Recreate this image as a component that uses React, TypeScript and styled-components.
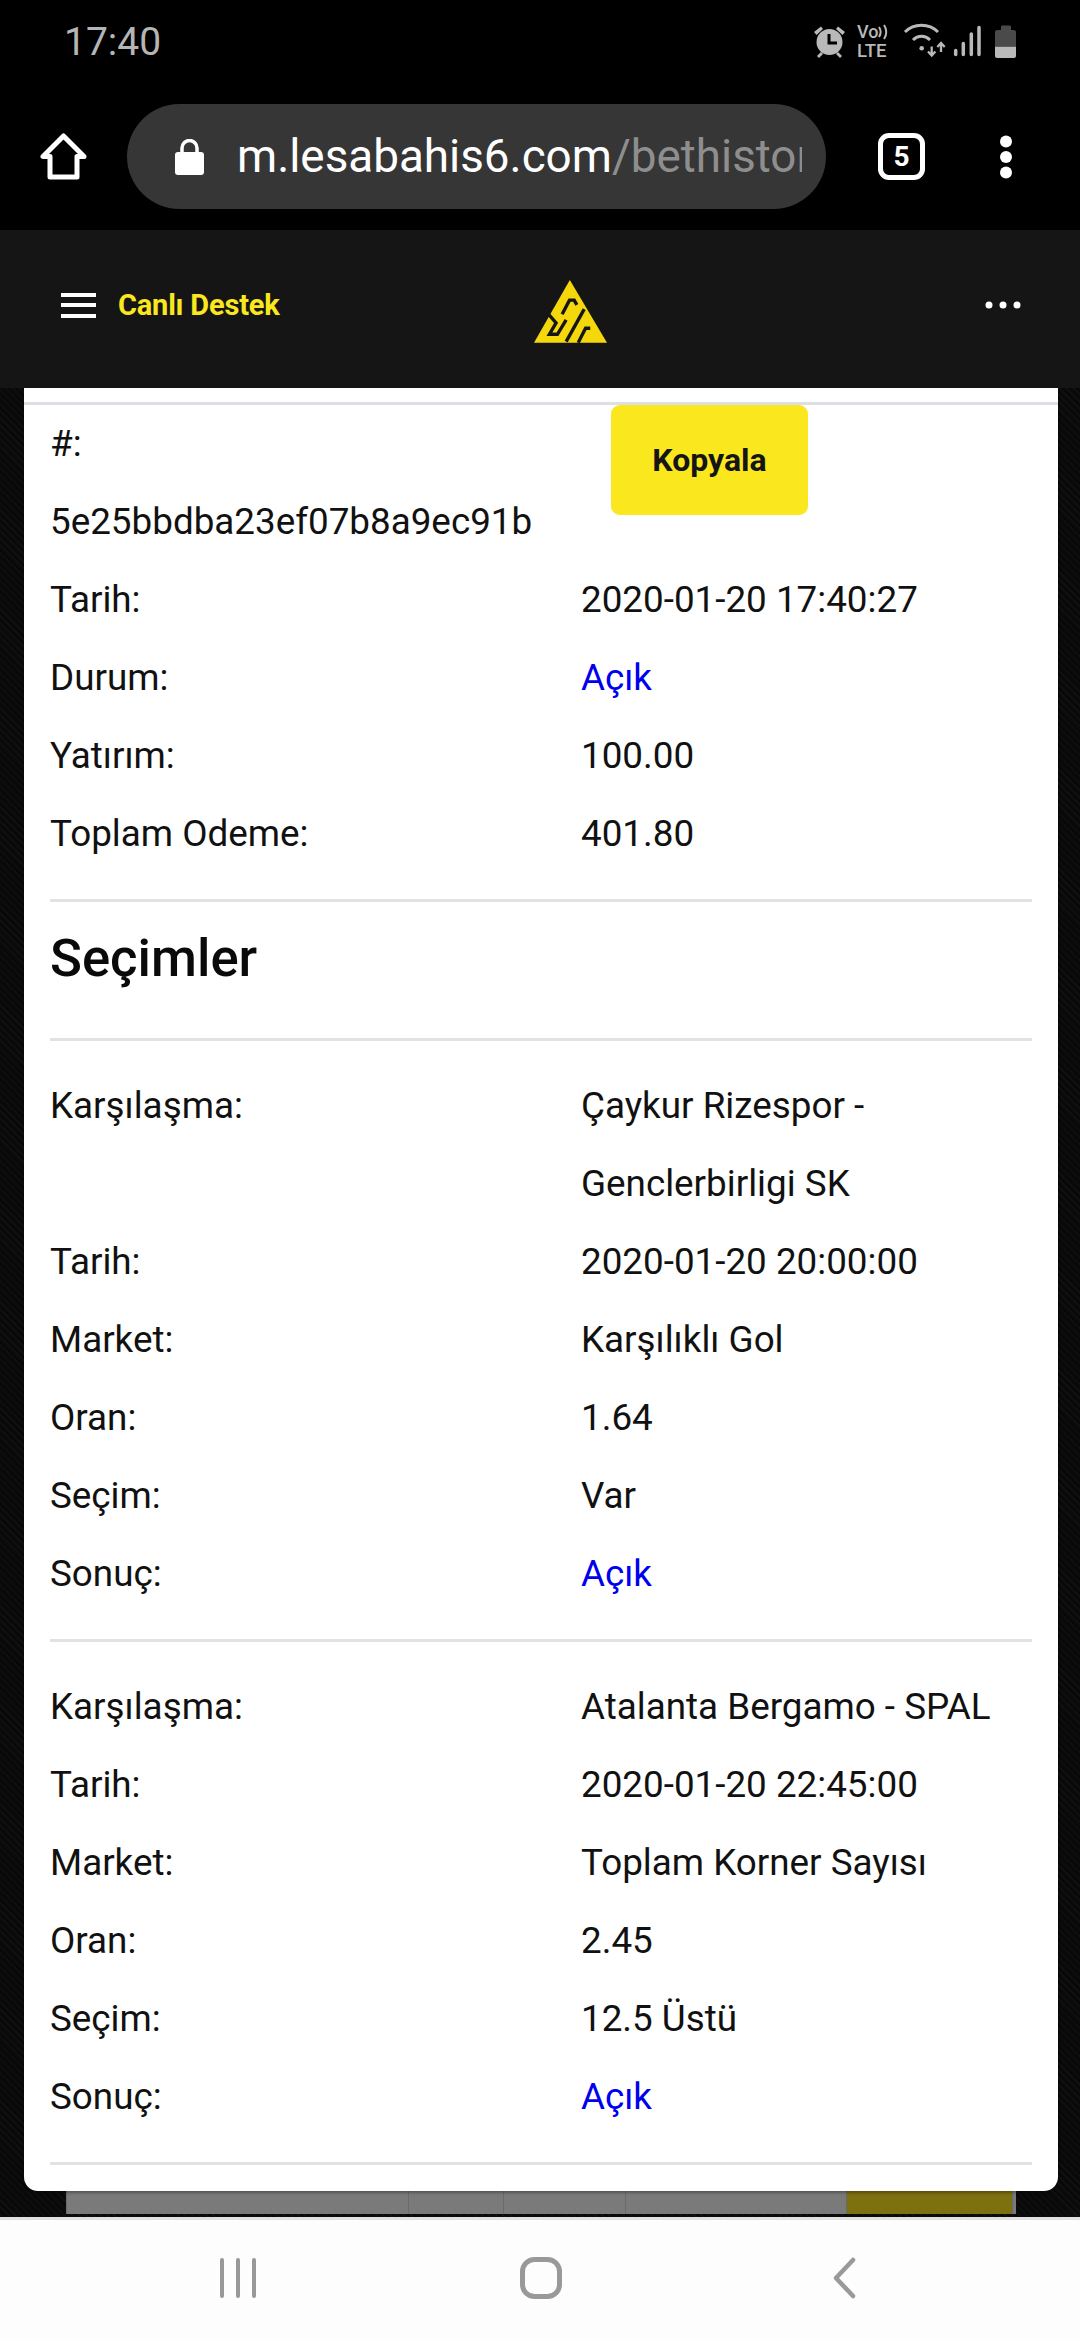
import * as React from 'react';
import styled, { createGlobalStyle } from 'styled-components';

const GlobalStyle = createGlobalStyle`
  html, body {
    margin: 0;
    padding: 0;
    background: #000;
    font-family: Roboto, "Liberation Sans", sans-serif;
  }
`;

const yellow = '#fae71e';

const Screen = styled.div`
  width: 1080px;
  height: 2340px;
  display: flex;
  flex-direction: column;
  overflow: hidden;
`;

const StatusBar = styled.div`
  height: 66px;
  flex: none;
  background: #000;
  padding: 0 64px;
  display: flex;
  align-items: center;
  justify-content: space-between;
  box-sizing: border-box;
  margin-top: 9px;
`;

const Clock = styled.span`
  color: #b5b5b5;
  font-size: 39px;
  line-height: 44px;
`;

const BrowserBar = styled.div`
  height: 155px;
  flex: none;
  background: #000;
  display: flex;
  align-items: center;
  padding: 29px 0 21px 40px;
  box-sizing: border-box;
`;

const UrlPill = styled.div`
  width: 699px;
  height: 105px;
  margin-left: 40px;
  border-radius: 53px;
  background: #363636;
  display: flex;
  align-items: center;
  padding-left: 48px;
  box-sizing: border-box;
`;

const UrlText = styled.div`
  width: 565px;
  margin-left: 33px;
  overflow: hidden;
  white-space: nowrap;
  font-size: 45.800px;
  line-height: 60px;
  color: #fff;
`;

const UrlPath = styled.span`
  color: #8e8e8e;
`;

const BarIcons = styled.div`
  display: flex;
  align-items: center;
  height: 105px;
  margin-left: 52px;
  gap: 74px;
`;

const TabCount = styled.div`
  width: 47px;
  height: 47px;
  box-sizing: border-box;
  border: 5px solid #fff;
  border-radius: 11px;
  color: #fff;
  font-size: 28px;
  font-weight: 700;
  display: flex;
  align-items: center;
  justify-content: center;
`;

const SiteHeader = styled.header`
  height: 158px;
  flex: none;
  background: #151515;
  display: flex;
  align-items: center;
  padding: 0 59px 8px 61px;
  box-sizing: border-box;
  color: #fff;
`;

const Hamburger = styled.div`
  width: 35px;
  height: 25px;
  display: flex;
  flex-direction: column;
  justify-content: space-between;
  & > i {
    display: block;
    height: 4px;
    background: #fff;
  }
`;

const LiveSupport = styled.span`
  margin-left: 22px;
  color: ${yellow};
  font-size: 29px;
  font-weight: 700;
  letter-spacing: -0.2px;
`;

const LogoSlot = styled.div`
  flex: 1;
  display: flex;
  justify-content: center;
  padding-right: 124px;
  padding-top: 12px;
`;

const Page = styled.main`
  flex: 1;
  position: relative;
  min-height: 0;
  background: repeating-linear-gradient(45deg, #0b0b0b 0 2px, #111 2px 3px, #080808 3px 5px);
  padding: 0 22px 0 24px;
`;

const Strip = styled.div`
  position: absolute;
  left: 66px;
  width: 950px;
  top: 1803px;
  height: 23px;
  display: grid;
  grid-template-columns: 342px 95px 122px 221px 166px 4px;
  background: #7a7a7a;
`;

const StripCell = styled.div<{ $gold?: boolean }>`
  background: ${p => (p.$gold ? '#7c700f' : '#7a7a7a')};
  border-left: 1px solid #6a6a6a;
`;

const Card = styled.section`
  position: relative;
  z-index: 1;
  height: 1803px;
  box-sizing: border-box;
  background: #fff;
  border-radius: 0 0 14px 14px;
  box-shadow: 0 2px 3px rgba(0, 0, 0, 0.3);
  padding: 14px 26px 0;
  color: #111;
  font-size: 36.800px;
`;

const TopRule = styled.div`
  height: 3px;
  margin: 0 -26px;
  background: #dddfe4;
`;

const Rule = styled.div<{ $before?: number; $after?: number }>`
  height: 3px;
  background: #e2e2e2;
  margin: ${p => p.$before ?? 26}px 0 ${p => p.$after ?? 26}px;
`;

const Rows = styled.div`
  display: grid;
  grid-template-columns: 531px 1fr;
  line-height: 78px;
`;

const HashValue = styled.div`
  grid-column: 1;
  white-space: nowrap;
`;

const CopyButton = styled.button`
  grid-column: 2;
  grid-row: 1 / span 2;
  width: 197px;
  height: 110px;
  margin-left: 30px;
  border: 0;
  border-radius: 9px;
  background: ${yellow};
  color: #151515;
  font-family: inherit;
  font-size: 32px;
  font-weight: 700;
  padding: 0;
`;

const Value = styled.div<{ $open?: boolean }>`
  color: ${p => (p.$open ? '#0000ee' : 'inherit')};
`;

const Heading = styled.h2`
  margin: 0;
  font-size: 52.700px;
  font-weight: 500;
  line-height: 112px;
  color: #0a0a0a;
`;

const NavBar = styled.nav`
  height: 123px;
  flex: none;
  box-sizing: border-box;
  border-top: 3px solid #e0e0e0;
  background: #fdfdfd;
  display: grid;
  grid-template-columns: repeat(3, 303px);
  align-items: center;
  justify-items: center;
  padding: 0 0 4px 86px;
`;

const StatusIcons = () => (
  <svg width="203" height="34" viewBox="0 0 203 34" fill="none" overflow="visible">
    <circle cx="16.500" cy="17" r="13" fill="#b9b9b9" />
    <path d="M1 7l7-5.500 2 2.500-6.500 6zM32 7l-7-5.500-2 2.500 6.500 6zM4 31l4-4 2 2-4 4zM29 31l-4-4-2 2 4 4z" fill="#b9b9b9" />
    <path d="M16 9v9h8" stroke="#000" strokeWidth="3" />
    <text x="44" y="13" fill="#b9b9b9" fontSize="18" fontFamily="Roboto" fontWeight="500">Vo</text>
    <path d="M66 2c2 3 2 7 0 10M71 0c3 4 3 10 0 14" stroke="#b9b9b9" strokeWidth="2" />
    <text x="44" y="32" fill="#b9b9b9" fontSize="18.500" fontFamily="Roboto" fontWeight="500">LTE</text>
    <path d="M92 7c9-9 24-9 33 0M100 15c5-5 12-5 17 0" stroke="#b9b9b9" strokeWidth="3" />
    <circle cx="108.700" cy="23.300" r="2.300" fill="#b9b9b9" />
    <path d="M118.700 21.500v9M115 26.500l3.700 4 3.700-4M128 27V18M124.300 22l3.700-4 3.700 4" stroke="#b9b9b9" strokeWidth="2.300" />
    <path d="M142.700 25.500v4M150.300 18.500v11M158.300 9v20.500M166 2.500v27" stroke="#b9b9b9" strokeWidth="3.500" strokeLinecap="round" />
    <path d="M188 5V2c0-1 .5-1.500 1.500-1.500h7c1 0 1.500.5 1.500 1.500v3h3c1 0 2 1 2 2v14h-21V7c0-1 1-2 2-2z" fill="#4a4a4a" />
    <path d="M182 21.500h21V31c0 1-1 2-2 2h-17c-1 0-2-1-2-2z" fill="#b9b9b9" />
  </svg>
);

const HomeIcon = () => (
  <svg width="47" height="47" viewBox="0 0 47 47" fill="none">
    <path d="M23.500 3L3 23.500h7V44h27V23.500h7z" stroke="#fff" strokeWidth="5" strokeLinejoin="round" />
  </svg>
);

const LockIcon = () => (
  <svg width="29" height="36" viewBox="0 0 29 36" fill="none">
    <path d="M7 16V9a7.500 7.500 0 0 1 15 0v7" stroke="#fff" strokeWidth="3.500" />
    <rect x="0" y="13" width="29" height="23" rx="3" fill="#fff" />
  </svg>
);

const MoreVertical = () => (
  <svg width="14" height="44" viewBox="0 0 14 44" fill="#fff">
    <circle cx="7" cy="6.500" r="6" />
    <circle cx="7" cy="22" r="6" />
    <circle cx="7" cy="37.500" r="6" />
  </svg>
);

const MoreHorizontal = () => (
  <svg width="36" height="8" viewBox="0 0 36 8" fill="#fff">
    <circle cx="4" cy="4" r="3.500" />
    <circle cx="18" cy="4" r="3.500" />
    <circle cx="32" cy="4" r="3.500" />
  </svg>
);

const Logo = () => (
  <svg width="73" height="63" viewBox="100 88 218 188">
    <path d="M207 88L318 275H100z" fill="#f5d80c" />
    <g fill="none" stroke="#151515" strokeWidth="10">
      <path d="M250 175L196 272" />
      <path d="M228 162l-8-14h-14l-22 42" />
      <path d="M143 190l23 26-20 34h24l26-43" />
      <path d="M268 232h-14l-22 43" />
    </g>
  </svg>
);

const Recents = () => (
  <svg width="38" height="40" viewBox="0 0 38 40" stroke="#999" strokeWidth="4" strokeLinecap="round">
    <path d="M3 2v36M19 2v36M35 2v36" />
  </svg>
);

const HomeNav = () => (
  <svg width="42" height="42" viewBox="0 0 42 42" fill="none">
    <rect x="2.500" y="2.500" width="37" height="37" rx="12" stroke="#999" strokeWidth="5" />
  </svg>
);

const BackNav = () => (
  <svg width="24" height="42" viewBox="0 0 24 42" fill="none">
    <path d="M21 3L4 21l17 18" stroke="#999" strokeWidth="4.500" strokeLinecap="round" strokeLinejoin="round" />
  </svg>
);

type Pair = [string, string];

const summary: Pair[] = [
  ['Tarih:', '2020-01-20 17:40:27'],
  ['Durum:', 'Açık'],
  ['Yatırım:', '100.00'],
  ['Toplam Odeme:', '401.80'],
];

const selections: Pair[][] = [
  [
    ['Karşılaşma:', 'Çaykur Rizespor - Genclerbirligi SK'],
    ['Tarih:', '2020-01-20 20:00:00'],
    ['Market:', 'Karşılıklı Gol'],
    ['Oran:', '1.64'],
    ['Seçim:', 'Var'],
    ['Sonuç:', 'Açık'],
  ],
  [
    ['Karşılaşma:', 'Atalanta Bergamo - SPAL'],
    ['Tarih:', '2020-01-20 22:45:00'],
    ['Market:', 'Toplam Korner Sayısı'],
    ['Oran:', '2.45'],
    ['Seçim:', '12.5 Üstü'],
    ['Sonuç:', 'Açık'],
  ],
];

const renderPairs = (pairs: Pair[]) =>
  pairs.map(([label, value]) => (
    <React.Fragment key={label}>
      <div>{label}</div>
      <Value $open={value === 'Açık'}>{value}</Value>
    </React.Fragment>
  ));

export default function App() {
  return (
    <Screen>
      <GlobalStyle />
      <StatusBar>
        <Clock>17:40</Clock>
        <StatusIcons />
      </StatusBar>
      <BrowserBar>
        <HomeIcon />
        <UrlPill>
          <LockIcon />
          <UrlText>
            m.lesabahis6.com<UrlPath>/bethistory</UrlPath>
          </UrlText>
        </UrlPill>
        <BarIcons>
          <TabCount>5</TabCount>
          <MoreVertical />
        </BarIcons>
      </BrowserBar>
      <SiteHeader>
        <Hamburger>
          <i />
          <i />
          <i />
        </Hamburger>
        <LiveSupport>Canlı Destek</LiveSupport>
        <LogoSlot>
          <Logo />
        </LogoSlot>
        <MoreHorizontal />
      </SiteHeader>
      <Page>
        <Card>
          <TopRule />
          <Rows>
            <div>#:</div>
            <CopyButton>Kopyala</CopyButton>
            <HashValue>5e25bbdba23ef07b8a9ec91b</HashValue>
            {renderPairs(summary)}
          </Rows>
          <Rule $after={0} />
          <Heading>Seçimler</Heading>
          <Rule $before={24} />
          {selections.map((group, i) => (
            <React.Fragment key={i}>
              <Rows>{renderPairs(group)}</Rows>
              <Rule />
            </React.Fragment>
          ))}
        </Card>
        <Strip>
          <StripCell />
          <StripCell />
          <StripCell />
          <StripCell />
          <StripCell $gold />
          <StripCell />
        </Strip>
      </Page>
      <NavBar>
        <Recents />
        <HomeNav />
        <BackNav />
      </NavBar>
    </Screen>
  );
}
